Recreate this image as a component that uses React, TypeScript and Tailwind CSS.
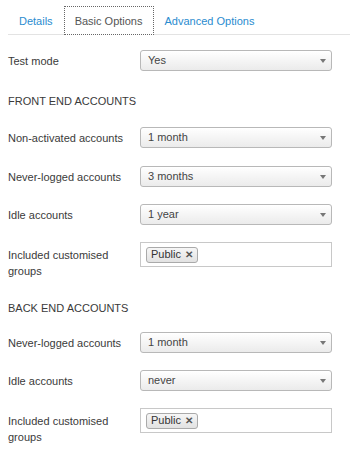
import React from "react";

const font = { fontFamily: '"Liberation Sans", Arial, sans-serif' };

function Select({ value }: { value: string }) {
  return (
    <div className="relative flex h-[21px] w-[192px] items-center rounded-[3px] border border-[#b8b8b8] bg-gradient-to-b from-white to-[#ebebeb] pl-[7px] text-[11px] text-[#444] shadow-[inset_0_1px_0_#fff]">
      <span>{value}</span>
      <span className="absolute right-[5px] top-[8px] h-0 w-0 border-x-[3px] border-t-[4px] border-x-transparent border-t-[#777]" />
    </div>
  );
}

function Tags() {
  return (
    <div className="flex h-[25px] w-[192px] items-center border border-[#c8c8c8] bg-white pl-[5px]">
      <div className="flex h-[16px] items-center gap-[4px] rounded-[3px] border border-[#aaa] bg-gradient-to-b from-[#f6f6f6] to-[#e2e2e2] px-[4px] text-[11px] text-[#333]">
        <span>Public</span>
        <span className="text-[10px] font-bold leading-none text-[#555]">✕</span>
      </div>
    </div>
  );
}

function Row({ label, children, mt }: { label: string; children: React.ReactNode; mt: string }) {
  return (
    <div className={`flex items-center ${mt}`}>
      <div className="w-[132px] pt-[2px] text-[11px] text-[#3a3a3a]">{label}</div>
      {children}
    </div>
  );
}

function TagRow({ mt }: { mt: string }) {
  return (
    <div className={`flex items-start ${mt}`}>
      <div className="w-[132px] pt-[5px] text-[11px] leading-[16px] text-[#3a3a3a]">
        Included customised
        <br />
        groups
      </div>
      <Tags />
    </div>
  );
}

export default function App() {
  return (
    <div className="h-[459px] w-[350px] overflow-hidden bg-white" style={font}>
      <div className="ml-[8px] flex h-[35px] items-end border-b border-[#e3e3e3] pt-[6px]">
        <div className="flex h-[28px] items-center px-[11px] pt-[2px] text-[11px] text-[#2a8ccf]">Details</div>
        <div className="-mb-px flex h-[29px] items-center border border-dotted border-[#666] bg-white px-[10px] pt-[1px] text-[11px] text-[#555]">
          Basic Options
        </div>
        <div className="flex h-[28px] items-center px-[11px] pt-[2px] text-[11px] text-[#2a8ccf]">Advanced Options</div>
      </div>
      <div className="pl-[8px]">
        <Row label="Test mode" mt="mt-[15px]">
          <Select value="Yes" />
        </Row>
        <div className="mt-[24px] text-[11px] leading-[13px] text-[#3a3a3a]">FRONT END ACCOUNTS</div>
        <Row label="Non-activated accounts" mt="mt-[19px]">
          <Select value="1 month" />
        </Row>
        <Row label="Never-logged accounts" mt="mt-[18px]">
          <Select value="3 months" />
        </Row>
        <Row label="Idle accounts" mt="mt-[17px]">
          <Select value="1 year" />
        </Row>
        <TagRow mt="mt-[17px]" />
        <div className="mt-[23px] text-[11px] leading-[13px] text-[#3a3a3a]">BACK END ACCOUNTS</div>
        <Row label="Never-logged accounts" mt="mt-[17px]">
          <Select value="1 month" />
        </Row>
        <Row label="Idle accounts" mt="mt-[17px]">
          <Select value="never" />
        </Row>
        <TagRow mt="mt-[17px]" />
      </div>
    </div>
  );
}
